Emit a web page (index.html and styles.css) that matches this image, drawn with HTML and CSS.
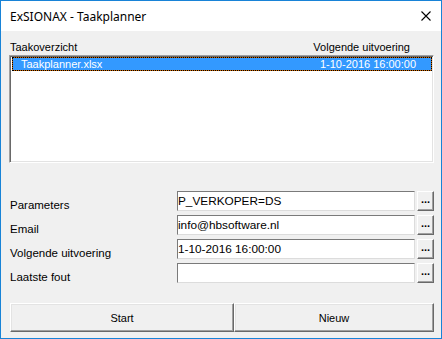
FILE: index.html
```html
<!DOCTYPE html>
<html>
<head>
    <title>ExSIONAX - Taakplanner</title>
    <link rel="stylesheet" href="styles.css">
</head>
<body>
    <div class="window">
        <div class="titlebar">
            <span class="title">ExSIONAX - Taakplanner</span>
            <span class="close">
                <svg width="10" height="10" viewBox="0 0 10 10"><path d="M0.5 0.5 L9.5 9.5 M9.5 0.5 L0.5 9.5" stroke="#000" stroke-width="1.1" fill="none"/></svg>
            </span>
        </div>

        <div class="client">
            <div class="list-head">
                <span>Taakoverzicht</span>
                <span class="col-next">Volgende uitvoering</span>
            </div>
            <div class="listbox">
                <div class="row selected">
                    <span>Taakplanner.xlsx</span>
                    <span>1-10-2016 16:00:00</span>
                </div>
            </div>

            <div class="fields">
                <label>Parameters</label>
                <div class="textbox">P_VERKOPER=DS</div>
                <button class="dots">...</button>

                <label>Email</label>
                <div class="textbox">info@hbsoftware.nl</div>
                <button class="dots">...</button>

                <label>Volgende uitvoering</label>
                <div class="textbox">1-10-2016 16:00:00</div>
                <button class="dots">...</button>

                <label>Laatste fout</label>
                <div class="textbox"></div>
                <button class="dots">...</button>
            </div>

            <div class="actions">
                <button class="btn">Start</button>
                <button class="btn">Nieuw</button>
            </div>
        </div>
    </div>
</body>
</html>
```

FILE: styles.css
```css
body {
    margin: 0;
    padding: 0;
    background-color: #f0f0f0;
    font-family: 'Liberation Sans', Arial, sans-serif;
    font-size: 11px;
    color: #000;
}

.window {
    width: 442px;
    height: 339px;
    box-sizing: border-box;
    border: 1px solid #1883d7;
    display: flex;
    flex-direction: column;
}

.titlebar {
    height: 30px;
    background: white;
    display: flex;
    align-items: center;
    justify-content: space-between;
    padding: 0 10px 0 9px;
}

.title {
    font-family: 'Noto Sans', sans-serif;
    font-size: 12px;
}

.close {
    display: flex;
}

.client {
    flex: 1;
    background-color: #f0f0f0;
    padding: 7px 7px 0 8px;
}

.list-head {
    display: flex;
    height: 17px;
    align-items: center;
    padding-left: 1px;
    font-size: 11px;
}

.col-next {
    margin-left: auto;
    margin-right: 24px;
}

.listbox {
    height: 108px;
    box-sizing: border-box;
    background: white;
    border-top: 1px solid #a0a0a0;
    border-left: 1px solid #a0a0a0;
    border-right: 1px solid #ffffff;
    border-bottom: 1px solid #ffffff;
    box-shadow: inset 1px 1px 0 #696969, inset -1px -1px 0 #e3e3e3;
    padding: 1px 1px 0 2px;
}

.row {
    display: flex;
    justify-content: space-between;
    height: 14px;
    line-height: 13px;
    box-sizing: border-box;
    padding: 0 15px 0 8px;
}

.selected {
    background-color: #3399ff;
    color: white;
    border: 1px solid #cc6600;
    outline: 1px dotted #000;
    outline-offset: -1px;
}

.fields {
    margin-top: 28px;
    display: grid;
    grid-template-columns: 165px 238px 17px;
    grid-auto-rows: 20px;
    row-gap: 4px;
    column-gap: 2px;
    margin-left: 1px;
}

.fields label {
    padding-top: 8px;
    line-height: 13px;
    font-size: 11.5px;
}

.textbox {
    background: white;
    box-sizing: border-box;
    border-top: 1px solid #7a7a7a;
    border-left: 1px solid #7a7a7a;
    border-right: 1px solid #dcdcdc;
    border-bottom: 1px solid #dcdcdc;
    padding: 3px 0 0 0;
    line-height: 13px;
    font-size: 11.8px;
}

.dots {
    margin: 0;
    padding: 0 0 4px 0;
    box-sizing: border-box;
    background: #f0f0f0;
    border-top: 1px solid #ffffff;
    border-left: 1px solid #ffffff;
    border-right: 1px solid #696969;
    border-bottom: 1px solid #696969;
    box-shadow: inset -1px -1px 0 #a0a0a0;
    font-family: 'Liberation Sans', Arial, sans-serif;
    font-size: 11px;
    font-weight: bold;
    line-height: 10px;
}

.actions {
    margin-top: 20px;
    display: flex;
    margin-left: 1px;
}

.btn {
    margin: 0;
    height: 29px;
    box-sizing: border-box;
    background: #f0f0f0;
    border-top: 1px solid #ffffff;
    border-left: 1px solid #ffffff;
    border-right: 1px solid #696969;
    border-bottom: 1px solid #696969;
    box-shadow: inset -1px -1px 0 #a0a0a0, inset 1px 1px 0 #e3e3e3;
    font-family: 'Liberation Sans', Arial, sans-serif;
    font-size: 11px;
    color: #000;
}

.btn:first-child {
    width: 224px;
}

.btn:last-child {
    width: 200px;
}
```
